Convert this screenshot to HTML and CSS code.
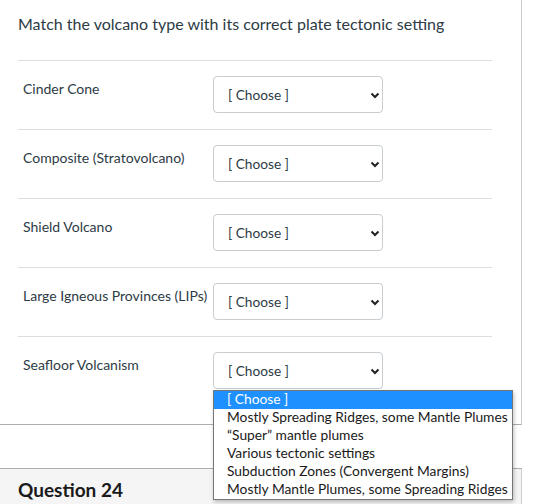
FILE: index.html
```html
<!DOCTYPE html>
<html>
<head>
<meta charset="utf-8">
<link rel="stylesheet" href="styles.css">
</head>
<body>
<div class="card">
  <div class="question-text">Match the volcano type with its correct plate tectonic setting</div>
  <div class="answers">
    <div class="row">
      <div class="label">Cinder Cone</div>
      <div class="select-wrap">
        <div class="select">[ Choose ]</div>
        <svg class="chev" width="10" height="7" viewBox="0 0 10 7"><path d="M1.5 1.5 L5 5 L8.5 1.5" fill="none" stroke="#222" stroke-width="2"/></svg>
      </div>
    </div>
    <div class="row">
      <div class="label">Composite (Stratovolcano)</div>
      <div class="select-wrap">
        <div class="select">[ Choose ]</div>
        <svg class="chev" width="10" height="7" viewBox="0 0 10 7"><path d="M1.5 1.5 L5 5 L8.5 1.5" fill="none" stroke="#222" stroke-width="2"/></svg>
      </div>
    </div>
    <div class="row">
      <div class="label">Shield Volcano</div>
      <div class="select-wrap">
        <div class="select">[ Choose ]</div>
        <svg class="chev" width="10" height="7" viewBox="0 0 10 7"><path d="M1.5 1.5 L5 5 L8.5 1.5" fill="none" stroke="#222" stroke-width="2"/></svg>
      </div>
    </div>
    <div class="row">
      <div class="label">Large Igneous Provinces (LIPs)</div>
      <div class="select-wrap">
        <div class="select">[ Choose ]</div>
        <svg class="chev" width="10" height="7" viewBox="0 0 10 7"><path d="M1.5 1.5 L5 5 L8.5 1.5" fill="none" stroke="#222" stroke-width="2"/></svg>
      </div>
    </div>
    <div class="row">
      <div class="label">Seafloor Volcanism</div>
      <div class="select-wrap">
        <div class="select">[ Choose ]</div>
        <svg class="chev" width="10" height="7" viewBox="0 0 10 7"><path d="M1.5 1.5 L5 5 L8.5 1.5" fill="none" stroke="#222" stroke-width="2"/></svg>
        <ul class="dropdown">
          <li class="selected">[ Choose ]</li>
          <li>Mostly Spreading Ridges, some Mantle Plumes</li>
          <li>“Super” mantle plumes</li>
          <li>Various tectonic settings</li>
          <li>Subduction Zones (Convergent Margins)</li>
          <li>Mostly Mantle Plumes, some Spreading Ridges</li>
        </ul>
      </div>
    </div>
  </div>
</div>
<div class="card next">
  <div class="header">Question 24</div>
</div>
</body>
</html>
```
FILE: styles.css
```css
html, body {
  margin: 0;
  padding: 0;
  background: #fff;
}
body {
  font-family: Lato, "Noto Sans", sans-serif;
  color: #2d3b45;
  height: 504px;
  overflow: hidden;
}
.card {
  width: 521px;
  border-right: 1px solid #c7cdd1;
  border-bottom: 1px solid #a9aeb2;
  padding-bottom: 19px;
}
.question-text {
  font-size: 16px;
  line-height: 20px;
  padding: 14px 18px 0 18px;
  height: 46px;
}
.answers {
  margin: 0 29px 0 18px;
}
.row {
  display: flex;
  border-top: 1px solid #dcdfe1;
  padding: 15px 0 16px 5px;
}
.label {
  width: 190px;
  font-size: 14px;
  line-height: 20px;
  padding-top: 3px;
}
.select-wrap {
  position: relative;
}
.select {
  box-sizing: border-box;
  width: 170px;
  height: 37px;
  border: 1px solid #c7cdd1;
  border-radius: 4px;
  padding: 0 14px;
  font-size: 13.7px;
  line-height: 35px;
  color: #2d3b45;
}
.chev {
  position: absolute;
  left: 157px;
  top: 16px;
}
.dropdown {
  position: absolute;
  left: 0;
  top: 38px;
  margin: 0;
  padding: 0;
  list-style: none;
  width: 300px;
  box-sizing: border-box;
  border: 1px solid #767676;
  background: #fff;
  box-shadow: 1px 2px 4px rgba(0,0,0,0.25);
  z-index: 5;
}
.dropdown li {
  font-size: 13.8px;
  line-height: 16px;
  height: 18px;
  padding-left: 13px;
  color: #1a1a1a;
  white-space: nowrap;
}
.dropdown li.selected {
  background: #1e90ff;
  color: #fff;
}
.card.next {
  margin-top: 43px;
  border-top: 1px solid #a9aeb2;
  border-bottom: none;
  background: #f5f5f5;
  height: 40px;
  padding: 0;
}
.header {
  font-size: 19px;
  font-weight: bold;
  color: #1a1a1a;
  padding: 10px 18px;
  line-height: 22px;
}
```
